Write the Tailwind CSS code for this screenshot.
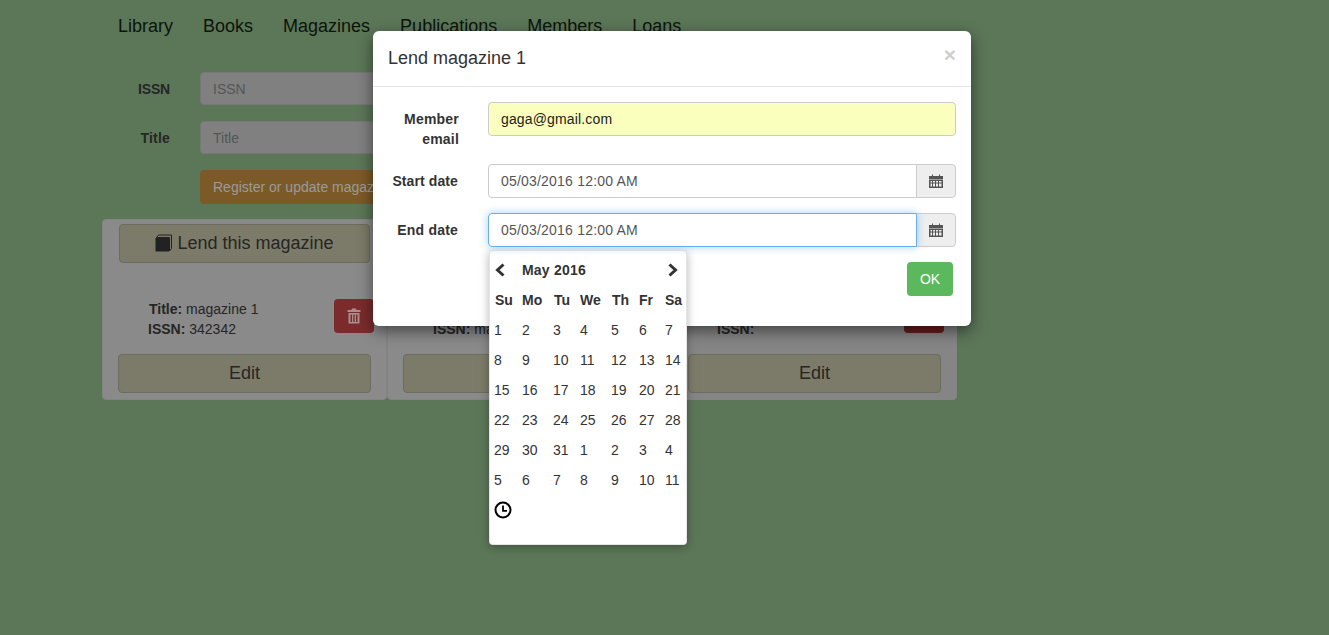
<!DOCTYPE html>
<html>
<head>
<meta charset="utf-8">
<script src="https://cdn.jsdelivr.net/npm/@tailwindcss/browser@4"></script>
</head>
<body class="relative w-[1329px] h-[635px] overflow-hidden bg-[#5c7658] font-['Liberation_Sans',Arial,sans-serif] text-[14px] leading-[20px] text-[#262626]">

<!-- page behind the dialog -->
<nav class="flex gap-[30px] pl-[118px] pt-[15px] text-[18px] leading-[22px] text-[#0c140b]">
  <span>Library</span><span>Books</span><span>Magazines</span><span>Publications</span><span>Members</span><span>Loans</span>
</nav>

<form class="ml-[102px] mt-[35px] w-[855px]">
  <div class="flex items-center h-[33px]">
    <span class="w-[68px] text-right font-bold tracking-[-0.2px]">ISSN</span>
    <input class="ml-[30px] w-[500px] h-[33px] px-3 rounded bg-[#808080] border border-[#787878] placeholder:text-[#555]" placeholder="ISSN">
  </div>
  <div class="flex items-center h-[33px] mt-[16px]">
    <span class="w-[68px] text-right font-bold tracking-[0.2px]">Title</span>
    <input class="ml-[30px] w-[500px] h-[33px] px-3 rounded bg-[#808080] border border-[#787878] placeholder:text-[#555]" placeholder="Title">
  </div>
  <div class="mt-[16px] ml-[98px] w-fit h-[34px] px-[13px] flex items-center rounded bg-[#7c5a28] text-[#9a9a9a]">Register or update magazine</div>
</form>

<div class="ml-[102px] mt-[15px] flex w-[855px]">
  <section class="w-[285px] h-[181px] rounded bg-[#8a8a8a] border border-[#848484] relative">
    <div class="ml-[16px] mt-[4px] w-[251px] h-[39px] pb-[2px] flex items-center justify-center gap-[5px] rounded border border-[#6c6c60] bg-[#7c7b69] text-[18px]">
      <svg width="17" height="18" viewBox="0 0 17 18"><path d="M1 4.500 3.500 1H16.500V14.500L14.500 17V3.500H2.500Z" fill="none" stroke="#222" stroke-width="1"/><rect x="0.500" y="4" width="13.500" height="13.500" fill="#222"/></svg>
      <span>Lend this magazine</span>
    </div>
    <div class="flex mt-[35px] h-[56px]">
      <p class="ml-[45px] pt-[1px]"><b class="pl-px">Title:</b> magazine 1<br><b>ISSN:</b> 342342</p>
      <div class="absolute left-[231px] top-[79px] w-[40px] h-[34px] rounded bg-[#7b2b2c] flex items-center justify-center">
        <svg width="14" height="16" viewBox="0 0 14 16" fill="#a98e8e"><path d="M5 0.500H9L9.500 2H13.500V4H0.500V2H4.500Z"/><path d="M1.500 5H12.500V15.500H1.500ZM3.500 6.500V14H5V6.500ZM6.300 6.500V14H7.700V6.500ZM9 6.500V14H10.500V6.500Z" fill-rule="evenodd"/></svg>
      </div>
    </div>
    <div class="ml-[15px] w-[253px] h-[39px] pb-[2px] flex items-center justify-center rounded border border-[#6c6c60] bg-[#7c7b69] text-[18px]">Edit</div>
  </section>

  <section class="w-[285px] h-[181px] rounded bg-[#8a8a8a] border border-[#848484] relative">
    <div class="ml-[16px] mt-[4px] w-[251px] h-[39px] rounded border border-[#6c6c60] bg-[#7c7b69]"></div>
    <p class="ml-[45px] mt-[35px] h-[56px] pt-[1px]"><b class="pl-px">Title:</b><br><b>ISSN:</b> ma</p>
    <div class="ml-[15px] w-[253px] h-[39px] rounded border border-[#6c6c60] bg-[#7c7b69]"></div>
  </section>

  <section class="w-[285px] h-[181px] rounded bg-[#858585] border border-[#848484] relative">
    <div class="ml-[15px] mt-[4px] w-[251px] h-[39px] rounded border border-[#6c6c60] bg-[#7c7b69]"></div>
    <p class="ml-[44px] mt-[35px] h-[56px] pt-[1px]"><b class="pl-px">Title:</b><br><b>ISSN:</b></p>
    <div class="absolute left-[231px] top-[79px] w-[40px] h-[34px] rounded bg-[#631e1d]"></div>
    <div class="ml-[15px] w-[253px] h-[39px] pb-[2px] flex items-center justify-center rounded border border-[#6c6c60] bg-[#7c7b69] text-[18px]">Edit</div>
  </section>
</div>

<!-- dialog -->
<div class="absolute left-[373px] top-[31px] w-[598px] h-[295px] rounded-[6px] bg-white shadow-[0_5px_15px_rgba(0,0,0,0.5)] text-[#333]">
  <header class="relative h-[56px] border-b border-[#e5e5e5] pl-[15px] pt-[15px] text-[18px] leading-[25px]">
    Lend magazine 1
    <span class="absolute right-[15px] top-[10px] text-[21px] leading-[27px] font-bold text-[#cfcfcf]">×</span>
  </header>
  <div class="pt-[15px]">
    <div class="flex h-[62px]">
      <label class="w-[86px] pt-[7px] text-right font-bold tracking-[0.2px]">Member email</label>
      <input class="ml-[29px] w-[468px] h-[34px] px-3 rounded border border-[#ccc] bg-[#faffbd] text-[#222] tracking-[0.15px]" value="gaga@gmail.com">
    </div>
    <div class="flex h-[49px]">
      <label class="w-[85px] pt-[7px] text-right font-bold tracking-[0.1px]">Start date</label>
      <div class="ml-[30px] w-[468px] h-[34px] flex">
        <input class="flex-1 min-w-0 px-3 rounded-l border border-[#ccc] text-[#555] tracking-[0.2px]" value="05/03/2016 12:00 AM">
        <span class="w-[40px] -ml-px flex items-center justify-center rounded-r border border-[#ccc] bg-[#eee]">
          <svg width="14" height="14" viewBox="0 0 14 14"><path d="M0 2H3V0.500H4V2H10V0.500H11V2H14V5H0Z" fill="#555"/><path d="M0 5.500H14V14H0ZM1.500 7V8.500H3V7ZM4 7V8.500H6V7ZM7 7V8.500H9V7ZM10 7V8.500H12.500V7ZM1.500 9.500V12.500H3V9.500ZM4 9.500V12.500H6V9.500ZM7 9.500V12.500H9V9.500ZM10 9.500V12.500H12.500V9.500Z" fill="#555" fill-rule="evenodd"/></svg>
        </span>
      </div>
    </div>
    <div class="flex h-[49px]">
      <label class="w-[85px] pt-[7px] text-right font-bold tracking-[0.2px]">End date</label>
      <div class="ml-[30px] w-[468px] h-[34px] flex">
        <input class="flex-1 min-w-0 px-3 rounded-l border border-[#66afe9] shadow-[0_0_8px_rgba(102,175,233,0.6)] text-[#555] tracking-[0.2px] z-10" value="05/03/2016 12:00 AM">
        <span class="w-[40px] -ml-px flex items-center justify-center rounded-r border border-[#ccc] bg-[#eee]">
          <svg width="14" height="14" viewBox="0 0 14 14"><path d="M0 2H3V0.500H4V2H10V0.500H11V2H14V5H0Z" fill="#555"/><path d="M0 5.500H14V14H0ZM1.500 7V8.500H3V7ZM4 7V8.500H6V7ZM7 7V8.500H9V7ZM10 7V8.500H12.500V7ZM1.500 9.500V12.500H3V9.500ZM4 9.500V12.500H6V9.500ZM7 9.500V12.500H9V9.500ZM10 9.500V12.500H12.500V9.500Z" fill="#555" fill-rule="evenodd"/></svg>
        </span>
      </div>
    </div>
    <div class="flex justify-end pr-[18px]">
      <span class="w-[46px] h-[34px] flex items-center justify-center rounded bg-[#5cb85c] text-white">OK</span>
    </div>
  </div>
</div>

<!-- date picker -->
<div class="absolute left-[489px] top-[250px] w-[198px] h-[295px] rounded bg-white border border-black/10 shadow-[0_2px_10px_rgba(0,0,0,0.3)] pl-[4px] pt-[4px] text-[#333]">
  <div class="grid grid-cols-[28px_31px_27px_31px_28px_26px_22px] auto-rows-[30px] items-center">
    <svg width="12" height="14" viewBox="0 0 12 14"><path d="M9.500 1.500 3.500 7 9.500 12.500" fill="none" stroke="#333" stroke-width="3"/></svg>
    <b class="col-span-5 whitespace-nowrap tracking-[0.2px]">May 2016</b>
    <svg class="ml-[2px]" width="12" height="14" viewBox="0 0 12 14"><path d="M2.500 1.500 8.500 7 2.500 12.500" fill="none" stroke="#333" stroke-width="3"/></svg>
    <b class="pl-[1px]">Su</b><b>Mo</b><b class="pl-[1px]">Tu</b><b>We</b><b class="pl-[1px]">Th</b><b>Fr</b><b>Sa</b>
    <span>1</span><span>2</span><span>3</span><span>4</span><span>5</span><span>6</span><span>7</span>
    <span>8</span><span>9</span><span>10</span><span>11</span><span>12</span><span>13</span><span>14</span>
    <span>15</span><span>16</span><span>17</span><span>18</span><span>19</span><span>20</span><span>21</span>
    <span>22</span><span>23</span><span>24</span><span>25</span><span>26</span><span>27</span><span>28</span>
    <span>29</span><span>30</span><span>31</span><span>1</span><span>2</span><span>3</span><span>4</span>
    <span>5</span><span>6</span><span>7</span><span>8</span><span>9</span><span>10</span><span>11</span>
    <svg class="col-span-7" width="18" height="18" viewBox="0 0 18 18"><circle cx="9" cy="9" r="7.500" fill="none" stroke="#000" stroke-width="2"/><path d="M9 4.500V9.800H13" fill="none" stroke="#000" stroke-width="1.800"/></svg>
  </div>
</div>
</body>
</html>
